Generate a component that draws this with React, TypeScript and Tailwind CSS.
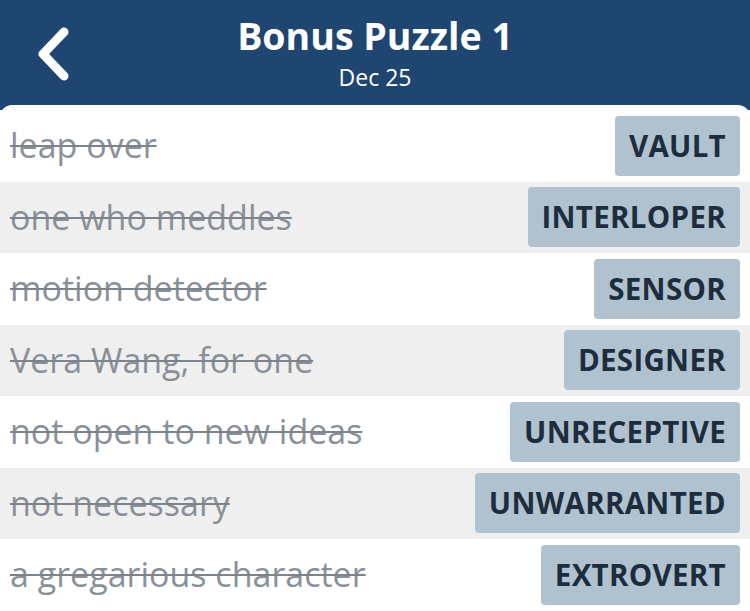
import React from 'react';

const clues = [
  { clue: 'leap over', answer: 'VAULT' },
  { clue: 'one who meddles', answer: 'INTERLOPER' },
  { clue: 'motion detector', answer: 'SENSOR' },
  { clue: 'Vera Wang, for one', answer: 'DESIGNER' },
  { clue: 'not open to new ideas', answer: 'UNRECEPTIVE' },
  { clue: 'not necessary', answer: 'UNWARRANTED' },
  { clue: 'a gregarious character', answer: 'EXTROVERT' },
];

const font = { fontFamily: '"Open Sans", "Noto Sans", sans-serif' };

export default function App() {
  return (
    <div className="w-[750px] h-[611px] overflow-hidden bg-[#1f4670]" style={font}>
      {/* Header */}
      <div className="relative h-[105px] flex flex-col items-center text-white">
        <button className="absolute left-[33px] top-[26px] w-[40px] h-[56px] flex items-center justify-center">
          <svg width="38" height="54" viewBox="0 0 38 54" fill="none">
            <path d="M30 5 L9 27 L30 49" stroke="white" strokeWidth="9" strokeLinecap="round" strokeLinejoin="round" />
          </svg>
        </button>
        <h1 className="mt-[11px] text-[37.5px] leading-[50px] font-bold">Bonus Puzzle 1</h1>
        <p className="text-[23px] leading-[28px] mt-[2px]">Dec 25</p>
      </div>

      {/* Clue list card */}
      <div className="bg-white rounded-t-[12px] pt-[5px] h-[506px]">
        {clues.map((c, i) => (
          <div
            key={c.answer}
            className={`h-[71.5px] flex items-center justify-between pl-[10px] pr-[10px] ${i % 2 === 1 ? 'bg-[#efefef]' : 'bg-white'}`}
          >
            <span className="text-[34px] text-[#8a9098] line-through decoration-[2px] decoration-[#7d838b]">
              {c.clue}
            </span>
            <span className="h-[60px] flex items-center px-[14px] rounded-[4px] bg-[#b0c1d0] text-[29.5px] font-bold text-[#1e2d3d] tracking-[0.3px]">
              {c.answer}
            </span>
          </div>
        ))}
      </div>
    </div>
  );
}
